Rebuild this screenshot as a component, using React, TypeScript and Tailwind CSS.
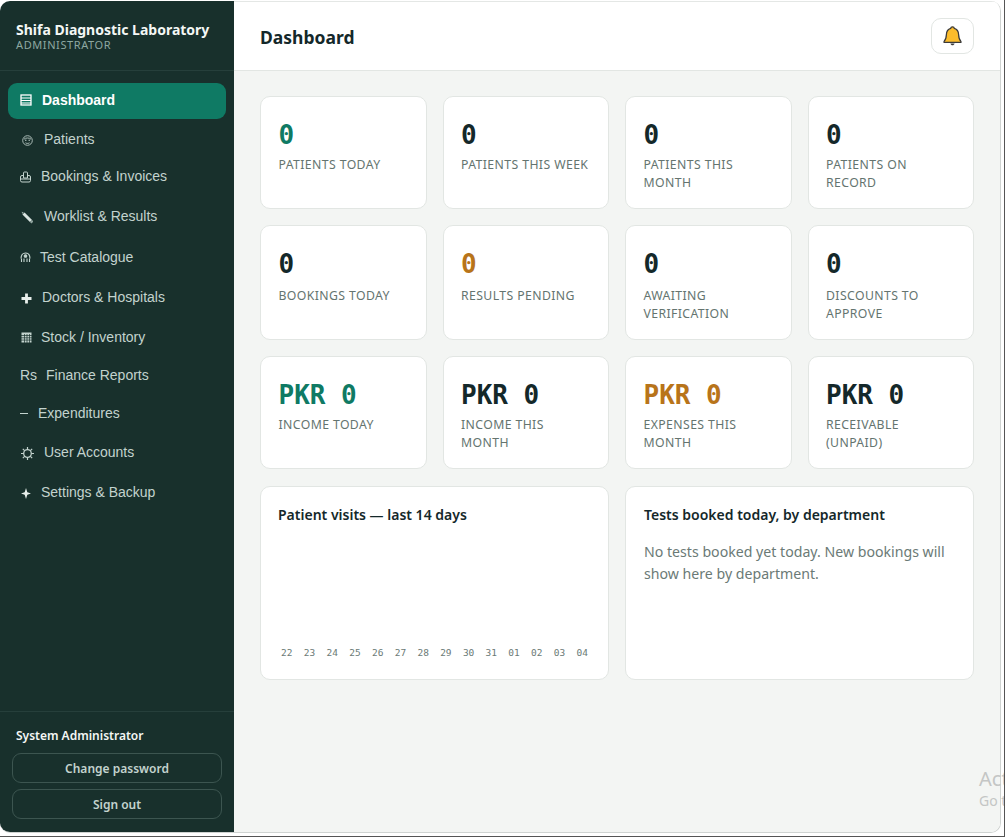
import React from 'react'

function DashIcon() {
  return (
    <svg width="12" height="12" viewBox="0 0 12 12" fill="none" stroke="currentColor" strokeWidth="1.300">
      <rect x="1" y="1" width="10" height="10" />
      <path d="M1 4h10M1 6.500h10M1 9h10" strokeWidth="1.200" />
    </svg>
  )
}

function FaceIcon() {
  return (
    <svg width="11" height="11" viewBox="0 0 11 11" className="mt-[2px] ml-[2px]">
      <circle cx="5.500" cy="5.500" r="4.800" fill="none" stroke="#a9bab5" strokeWidth="1" />
      <path d="M2 4.200c1-1.600 6-1.600 7 0" fill="none" stroke="#a9bab5" strokeWidth="1" />
      <circle cx="3.800" cy="5.300" r=".7" fill="#c3d3ce" />
      <circle cx="7.200" cy="5.300" r=".7" fill="#c3d3ce" />
      <path d="M3.500 7.800c1 .8 3 .8 4 0" fill="none" stroke="#c3d3ce" strokeWidth=".9" />
    </svg>
  )
}

function BagIcon() {
  return (
    <svg width="11" height="12" viewBox="0 0 11 12" fill="none" stroke="#c3d3ce" strokeWidth="1">
      <path d="M3.500 4.500H2A1.500 1.500 0 0 0 .5 6v3.500A1.500 1.500 0 0 0 2 11h7a1.500 1.500 0 0 0 1.500-1.500V6A1.500 1.500 0 0 0 9 4.500H7.500" />
      <path d="M3.500 7V2a1 1 0 0 1 1-1h2a1 1 0 0 1 1 1v5z" />
      <path d="M.5 8h10" />
    </svg>
  )
}

function PencilIcon() {
  return (
    <svg width="12" height="13" viewBox="0 0 12 13" className="mt-[2px] ml-[1px]">
      <path d="M2.500 2.500 10 10" stroke="#d9e4e0" strokeWidth="3" />
      <path d="M.6.800 2.800 1.300 1.300 3z" fill="#8fa39e" />
      <path d="M10 10l1.500 1.500" stroke="#8fa39e" strokeWidth="3" />
    </svg>
  )
}

function FlaskIcon() {
  return (
    <svg width="11" height="11" viewBox="0 0 11 11" fill="none" stroke="#c3d3ce" strokeWidth="1.100" className="mt-[1px]">
      <path d="M1 6.500C1 3 3 1 5.500 1S10 3 10 6.500" />
      <circle cx="5.500" cy="4" r="1.300" fill="#c3d3ce" />
      <path d="M1.500 10V6.500M4 10V6.500M7 10V6.500M9.500 10V6.500" />
    </svg>
  )
}

function PlusIcon() {
  return (
    <svg width="11" height="11" viewBox="0 0 11 11" className="ml-[1px] mt-[2px]">
      <path d="M5.500 .5v10M.5 5.500h10" stroke="#e8efec" strokeWidth="2.800" />
    </svg>
  )
}

function GridIcon() {
  return (
    <svg width="11" height="11" viewBox="0 0 11 11" className="ml-[1px]">
      <rect x=".5" y=".5" width="10" height="10" fill="#c3d3ce" />
      <path d="M0 3.500h11M0 5.800h11M0 8.100h11M3.500 2v9M6 2v9M8.500 2v9" stroke="#18302c" strokeWidth=".7" />
    </svg>
  )
}

function GearIcon() {
  return (
    <svg width="13" height="13" viewBox="0 0 13 13" fill="none" stroke="#c3d3ce" className="ml-[1px] mt-[2px]">
      <circle cx="6.500" cy="6.500" r="3.800" strokeWidth="1.300" />
      <path
        d="M6.500 0v2.500M6.500 10.500V13M0 6.500h2.500M10.500 6.500H13M1.800 1.800l1.800 1.800M9.400 9.400l1.800 1.800M1.800 11.200l1.800-1.800M9.400 3.600l1.800-1.800"
        strokeWidth="1.200"
      />
    </svg>
  )
}

function StarIcon() {
  return (
    <svg width="10" height="11" viewBox="0 0 10 11" className="ml-[1px] mt-[2px]">
      <path d="M5 0 6.300 4.200 10 5.500 6.300 6.800 5 11 3.700 6.800 0 5.500 3.700 4.200z" fill="#e8efec" />
    </svg>
  )
}

const navItems = [
  { label: 'Dashboard', icon: <DashIcon />, rowClass: 'h-9 mb-[1px] pb-[2px]', iconClass: 'w-[22px]', active: true },
  { label: 'Patients', icon: <FaceIcon />, rowClass: 'h-[38px]', iconClass: 'w-[24px]' },
  { label: 'Bookings & Invoices', icon: <BagIcon />, rowClass: 'h-[37px]', iconClass: 'w-[21px]' },
  { label: 'Worklist & Results', icon: <PencilIcon />, rowClass: 'h-[42px]', iconClass: 'w-[24px]' },
  { label: 'Test Catalogue', icon: <FlaskIcon />, rowClass: 'h-[40px]', iconClass: 'w-[20px]' },
  { label: 'Doctors & Hospitals', icon: <PlusIcon />, rowClass: 'h-[40px]', iconClass: 'w-[22px]' },
  { label: 'Stock / Inventory', icon: <GridIcon />, rowClass: 'h-[40px]', iconClass: 'w-[21px]' },
  { label: 'Finance Reports', icon: <span className="text-[14px]">Rs</span>, rowClass: 'h-[36px]', iconClass: 'w-[26px]' },
  { label: 'Expenditures', icon: <span className="block w-[8px] h-px bg-[#c3d3ce]" />, rowClass: 'h-[40px]', iconClass: 'w-[18px]' },
  { label: 'User Accounts', icon: <GearIcon />, rowClass: 'h-[38px]', iconClass: 'w-[24px]' },
  { label: 'Settings & Backup', icon: <StarIcon />, rowClass: 'h-[42px]', iconClass: 'w-[21px]' },
]

const statRows = [
  [
    { value: '0', label: 'Patients today', color: 'text-[#0f7a64]' },
    { value: '0', label: 'Patients this week', color: 'text-[#14282a]' },
    { value: '0', label: 'Patients this month', color: 'text-[#14282a]' },
    { value: '0', label: 'Patients on record', color: 'text-[#14282a]' },
  ],
  [
    { value: '0', label: 'Bookings today', color: 'text-[#14282a]' },
    { value: '0', label: 'Results pending', color: 'text-[#b8741a]' },
    { value: '0', label: 'Awaiting verification', color: 'text-[#14282a]' },
    { value: '0', label: 'Discounts to approve', color: 'text-[#14282a]' },
  ],
  [
    { value: 'PKR 0', label: 'Income today', color: 'text-[#0f7a64]' },
    { value: 'PKR 0', label: 'Income this month', color: 'text-[#14282a]' },
    { value: 'PKR 0', label: 'Expenses this month', color: 'text-[#b8741a]' },
    { value: 'PKR 0', label: 'Receivable (unpaid)', color: 'text-[#14282a]' },
  ],
]

const days = ['22', '23', '24', '25', '26', '27', '28', '29', '30', '31', '01', '02', '03', '04']

const uiFont = "font-['Noto_Sans','Open_Sans',sans-serif]"

function BellIcon() {
  return (
    <svg width="23" height="23" viewBox="0 0 20 20">
      <path
        d="M10 1.600c.9 0 1.500.6 1.600 1.400 2.400.7 3.600 2.800 3.700 5.200.1 2.700.6 4.600 2 6v1H2.700v-1c1.400-1.400 1.900-3.300 2-6 .1-2.400 1.300-4.500 3.700-5.200.1-.8.700-1.400 1.600-1.400z"
        fill="#fbbc2c"
        stroke="#3a3a3a"
        strokeWidth="1.100"
      />
      <path d="M8.200 16h3.600c-.2 1-1 1.600-1.800 1.600s-1.600-.6-1.800-1.600z" fill="#3a3a3a" />
    </svg>
  )
}

function Sidebar() {
  return (
    <aside className="w-[234px] shrink-0 bg-[#18302c] flex flex-col">
      <div className="h-[70px] px-4 pt-[19px] border-b border-[#263f3b] shrink-0">
        <div className={`${uiFont} text-[14px] leading-[20px] font-bold text-[#f4f7f5] whitespace-nowrap`}>
          Shifa Diagnostic Laboratory
        </div>
        <div className={`${uiFont} text-[11px] leading-[10px] tracking-[0.6px] text-[#8ea8a1]`}>ADMINISTRATOR</div>
      </div>

      <nav className="flex-1 px-2 pt-3 font-['Liberation_Sans',Arial,sans-serif]">
        {navItems.map((item) => (
          <div
            key={item.label}
            className={`flex items-center pl-3 ${item.rowClass} ${
              item.active ? 'bg-[#0f7a64] rounded-[9px] text-white font-bold' : 'text-[#c3d3ce]'
            } text-[14px]`}
          >
            <span className={`${item.iconClass} shrink-0`}>{item.icon}</span>
            <span className="whitespace-nowrap">{item.label}</span>
          </div>
        ))}
      </nav>

      <div className={`${uiFont} border-t border-[#263f3b] px-3 pt-[15px] pb-[13px] shrink-0`}>
        <div className="px-1 text-[12px] leading-[18px] font-semibold text-[#f4f7f5] mb-[8px]">System Administrator</div>
        <button className="block w-full h-[30px] pt-px rounded-[9px] border border-[#3c5550] text-[12px] font-semibold text-[#c3d3ce] mb-[6px]">
          Change password
        </button>
        <button className="block w-full h-[30px] pt-[2px] rounded-[9px] border border-[#3c5550] text-[12px] font-semibold text-[#c3d3ce]">
          Sign out
        </button>
      </div>
    </aside>
  )
}

function StatCard({ value, label, color, labelGap }: { value: string; label: string; color: string; labelGap: string }) {
  return (
    <div className="bg-white border border-[#e2e6e3] rounded-[10px] pl-[17.500px] pr-[17px] pt-[22px] pb-[16px]">
      <div className={`font-['DejaVu_Sans_Mono',monospace] font-bold text-[26px] leading-[32px] ${color}`}>{value}</div>
      <div className={`${uiFont} ${labelGap} text-[12.250px] leading-[18px] tracking-[0.4px] uppercase text-[#64746f] min-h-[36px]`}>
        {label}
      </div>
    </div>
  )
}

export default function App() {
  return (
    <div className="relative w-[1005px] h-[837px] bg-white border-r border-b border-[#555555] overflow-hidden">
      <div className="flex mt-px w-[1001px] h-[832px] rounded-[10px] overflow-hidden border-r border-b border-[#cfd3d1]">
        <Sidebar />
        <main className="flex-1 bg-[#f3f5f3] flex flex-col border-t border-[#e4e7e5]">
          <header className="h-[69px] shrink-0 bg-white border-b border-[#e2e6e3] px-[26px] pt-[2px] flex items-center justify-between">
            <h1 className={`${uiFont} text-[17.500px] font-bold text-[#14282a]`}>Dashboard</h1>
            <button className="w-[43px] h-[36px] -mt-[2px] rounded-[10px] border border-[#e2e6e3] flex items-center justify-center">
              <BellIcon />
            </button>
          </header>

          <div className="px-[26px] pt-[25px] flex flex-col gap-4">
            {statRows.map((row, i) => (
              <div key={i} className="grid grid-cols-4 gap-4">
                {row.map((stat) => (
                  <StatCard key={stat.label} {...stat} labelGap={i === 1 ? 'mt-[7px]' : 'mt-[5px]'} />
                ))}
              </div>
            ))}

            <div className="grid grid-cols-2 gap-4 mt-px">
              <div className="bg-white border border-[#e2e6e3] rounded-[10px] h-[194px] px-[17px] pt-[18px] flex flex-col">
                <h2 className={`${uiFont} text-[14px] leading-[20px] font-semibold text-[#14282a]`}>
                  Patient visits — last 14 days
                </h2>
                <div className="mt-auto mb-[20px] flex justify-between px-[3px]">
                  {days.map((d, i) => (
                    <span key={i} className="font-['DejaVu_Sans_Mono',monospace] text-[9.500px] leading-[12px] text-[#6b7a76]">
                      {d}
                    </span>
                  ))}
                </div>
              </div>
              <div className="bg-white border border-[#e2e6e3] rounded-[10px] h-[194px] px-[18px] pt-[18px]">
                <h2 className={`${uiFont} text-[14px] leading-[20px] font-semibold text-[#14282a]`}>
                  Tests booked today, by department
                </h2>
                <p className={`${uiFont} mt-[16px] text-[14.150px] leading-[22px] text-[#6b7a76]`}>
                  No tests booked yet today. New bookings will show here by department.
                </p>
              </div>
            </div>
          </div>
        </main>
      </div>

      <div className={`${uiFont} absolute left-[979px] top-[767px] text-[#c4c6c5] whitespace-nowrap`}>
        <div className="text-[20px] leading-[24px]">Act</div>
        <div className="text-[14px] leading-[20px]">Go t</div>
      </div>
    </div>
  )
}
